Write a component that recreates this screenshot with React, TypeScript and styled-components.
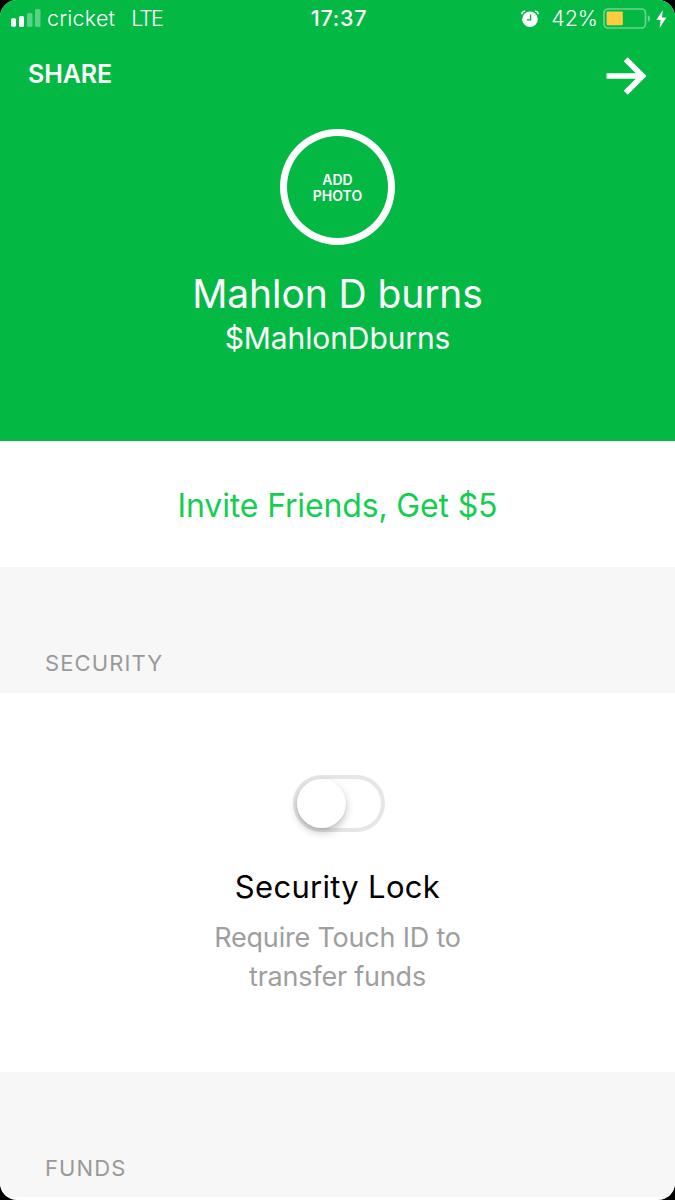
import React from "react";
import styled, { createGlobalStyle } from "styled-components";

const GlobalStyle = createGlobalStyle`
  * { box-sizing: border-box; }
  body { margin: 0; background: #000; font-family: Inter, "Liberation Sans", sans-serif; }
`;

const Screen = styled.main`
  width: 675px;
  height: 1200px;
  overflow: hidden;
  border-radius: 17px;
  background: #fff;
`;

const Header = styled.header`
  height: 441px;
  background: #03b944;
  color: #fff;
`;

const StatusBar = styled.div`
  display: grid;
  grid-template-columns: 1fr auto 1fr;
  align-items: center;
  height: 37px;
  padding: 0 8px 0 11px;
  font-size: 21.5px;
  line-height: 26px;
`;

const StatusGroup = styled.div<{ $end?: boolean }>`
  display: flex;
  align-items: center;
  justify-content: ${(p) => (p.$end ? "flex-end" : "flex-start")};
`;

const StatusText = styled.span<{ $weight?: number; $spacing?: number; $left?: number }>`
  font-weight: ${(p) => p.$weight ?? 300};
  letter-spacing: ${(p) => p.$spacing ?? 0}px;
  margin-left: ${(p) => p.$left ?? 0}px;
  margin-top: -1px;
  white-space: nowrap;
`;

const Icon = styled.svg<{ $left?: number }>`
  display: block;
  flex: none;
  margin-left: ${(p) => p.$left ?? 0}px;
`;

const NavBar = styled.nav`
  display: flex;
  justify-content: space-between;
  align-items: center;
  height: 77px;
  padding: 0 28px;
`;

const ShareButton = styled.button`
  border: 0;
  padding: 0;
  margin-top: -4px;
  background: none;
  color: inherit;
  font: 600 25px/30px Inter, sans-serif;
  letter-spacing: -0.1px;
`;

const Profile = styled.section`
  display: flex;
  flex-direction: column;
  align-items: center;
  padding-top: 15px;
`;

const Avatar = styled.div`
  display: flex;
  align-items: center;
  justify-content: center;
  width: 115px;
  height: 116px;
  padding-top: 2px;
  border: 7px solid #fff;
  border-radius: 50%;
  font-size: 14px;
  font-weight: 600;
  line-height: 16px;
  text-align: center;
`;

const Name = styled.h1`
  margin: 24px 0 0;
  font-size: 39px;
  font-weight: 400;
  line-height: 50px;
  letter-spacing: -0.1px;
`;

const Cashtag = styled.p`
  margin: 0;
  font-size: 30px;
  font-weight: 400;
  line-height: 39px;
  letter-spacing: -0.1px;
`;

const InviteRow = styled.button`
  display: block;
  width: 100%;
  height: 126px;
  padding: 3px 0 0;
  border: 0;
  background: #fff;
  color: #14ce50;
  font: 400 32px/40px Inter, sans-serif;
  letter-spacing: -0.15px;
`;

const SectionHeader = styled.h2<{ $height: number }>`
  height: ${(p) => p.$height}px;
  margin: 0;
  padding: 82px 45px 0;
  background: #f7f7f7;
  color: #999;
  font-size: 22px;
  font-weight: 400;
  line-height: 28px;
  letter-spacing: 1.1px;
`;

const SettingCard = styled.section`
  display: flex;
  flex-direction: column;
  align-items: center;
  height: 379px;
  padding-top: 82px;
`;

const Toggle = styled.div`
  width: 92px;
  height: 57px;
  margin-left: 3px;
  border: 4px solid #e6e6e6;
  border-radius: 29px;
`;

const Knob = styled.div`
  width: 49px;
  height: 49px;
  border-radius: 50%;
  background: #fff;
  box-shadow: 0 4px 9px rgba(0, 0, 0, 0.24), 0 1px 2px rgba(0, 0, 0, 0.08);
`;

const SettingTitle = styled.h3`
  margin: 35px 0 0;
  color: #000;
  font-size: 31px;
  font-weight: 400;
  line-height: 40px;
  letter-spacing: 0.3px;
`;

const SettingText = styled.p`
  margin: 12px 0 0;
  color: #9e9e9e;
  font-size: 27px;
  font-weight: 400;
  line-height: 38.5px;
  letter-spacing: -0.2px;
  text-align: center;
`;

const SignalIcon = () => (
  <Icon width="30" height="20" viewBox="0 0 30 20" fill="#fff">
    <rect x="0" y="9.3" width="5" height="8.5" rx="1.5" />
    <rect x="8" y="7" width="5" height="11" rx="1.5" />
    <rect x="16" y="4" width="5.5" height="14" rx="1.5" opacity="0.35" />
    <rect x="24" y="0" width="5.5" height="18" rx="1.5" opacity="0.35" />
  </Icon>
);

const AlarmIcon = () => (
  <Icon width="18" height="18" viewBox="0 0 18 18">
    <path d="M.8 4.2 A3 3 0 0 1 4.2 1.2 M13.8 1.2 A3 3 0 0 1 17.2 4.2" fill="none" stroke="#fff" strokeWidth="1.5" />
    <circle cx="9" cy="9.2" r="7.8" fill="#fff" />
    <path d="M9.6 4.5v5.4H5.8" fill="none" stroke="#03b944" strokeWidth="1.4" />
  </Icon>
);

const BatteryIcon = () => (
  <Icon $left={5} width="48" height="21" viewBox="0 0 48 21">
    <rect x="1" y="1" width="41.5" height="19" rx="4" fill="none" stroke="#fff" strokeOpacity="0.4" strokeWidth="1.7" />
    <rect x="3.6" y="3.6" width="16.2" height="13.6" rx="1" fill="#ffcc3d" />
    <path d="M44.8 7.2q2.4.6 2.4 3.3t-2.4 3.3z" fill="#fff" opacity="0.4" />
  </Icon>
);

const BoltIcon = () => (
  <Icon $left={5} width="11" height="18" viewBox="0 0 11 18" fill="#fff">
    <path d="M6.8 0 .4 10h4.2L3.6 18 10.4 7.5H6z" />
  </Icon>
);

const ArrowIcon = () => (
  <Icon width="41" height="38" viewBox="0 0 41 38" fill="none" stroke="#fff" strokeWidth="5.6">
    <path d="M.5 19H37M19.7 2.3 36.5 19 19.7 35.7" />
  </Icon>
);

export default function App() {
  return (
    <>
      <GlobalStyle />
      <Screen>
        <Header>
          <StatusBar>
            <StatusGroup>
              <SignalIcon />
              <StatusText $left={6} $spacing={0.2}>cricket</StatusText>
              <StatusText $left={16} $spacing={-1.9}>LTE</StatusText>
            </StatusGroup>
            <StatusText $weight={500} $spacing={0.7}>17:37</StatusText>
            <StatusGroup $end>
              <AlarmIcon />
              <StatusText $left={12}>42%</StatusText>
              <BatteryIcon />
              <BoltIcon />
            </StatusGroup>
          </StatusBar>
          <NavBar>
            <ShareButton>SHARE</ShareButton>
            <ArrowIcon />
          </NavBar>
          <Profile>
            <Avatar>ADD<br />PHOTO</Avatar>
            <Name>Mahlon D burns</Name>
            <Cashtag>$MahlonDburns</Cashtag>
          </Profile>
        </Header>
        <InviteRow>Invite Friends, Get $5</InviteRow>
        <SectionHeader $height={126}>SECURITY</SectionHeader>
        <SettingCard>
          <Toggle><Knob /></Toggle>
          <SettingTitle>Security Lock</SettingTitle>
          <SettingText>Require Touch ID to<br />transfer funds</SettingText>
        </SettingCard>
        <SectionHeader $height={125}>FUNDS</SectionHeader>
      </Screen>
    </>
  );
}
